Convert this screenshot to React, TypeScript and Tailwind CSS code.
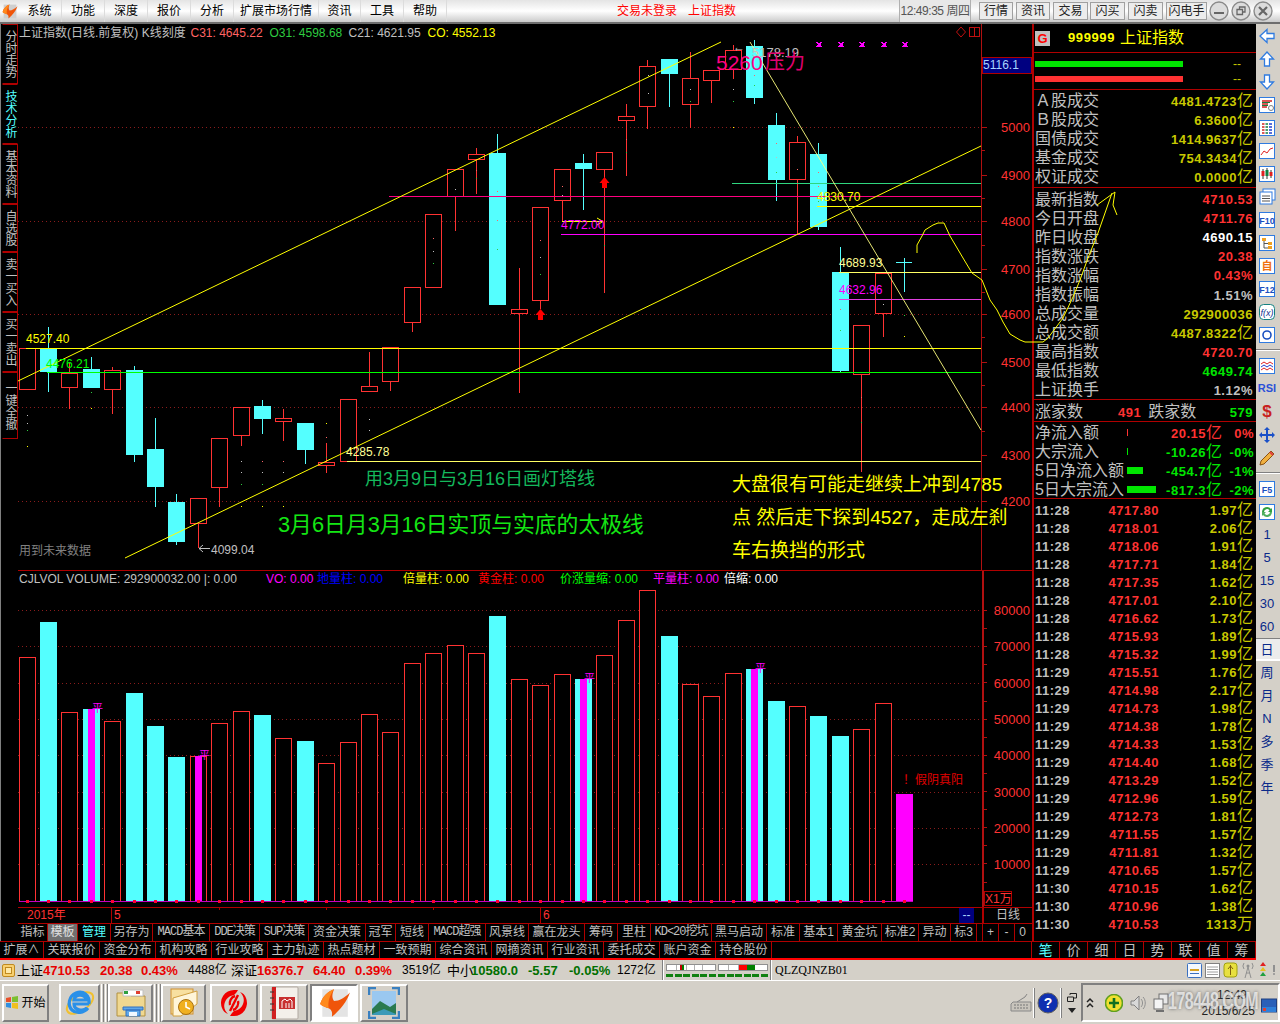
import type { ReactNode } from 'react'

const RED = '#ff3232'
const CYAN = '#54ffff'
const GRID = '#8a1c1c'
const AXIS = '#b01010'

// c = cyan (falling) candle, r = hollow red: [left, bodyTop, bodyBottom, wickTop, wickBottom]
const candles: [string, number, number, number, number, number][] = [
  ['r', 19, 348, 389, 348, 389], ['c', 40, 349, 372, 327, 392], ['r', 61, 373, 387, 363, 409],
  ['c', 83, 369, 388, 357, 388], ['r', 104, 370, 389, 367, 414], ['c', 126, 370, 455, 366, 462],
  ['c', 147, 449, 487, 418, 507], ['c', 168, 502, 542, 494, 545], ['r', 190, 498, 523, 498, 548],
  ['r', 211, 438, 487, 438, 507], ['r', 233, 407, 435, 407, 446], ['c', 254, 406, 419, 400, 434],
  ['r', 275, 418, 421, 409, 441], ['c', 297, 423, 450, 423, 464], ['r', 318, 462, 465, 443, 473],
  ['r', 340, 399, 461, 399, 461], ['r', 361, 386, 391, 352, 391], ['r', 382, 347, 381, 347, 391],
  ['r', 404, 287, 322, 287, 332], ['r', 425, 214, 287, 214, 288], ['r', 447, 169, 196, 169, 231],
  ['r', 468, 154, 159, 148, 194], ['c', 489, 153, 305, 134, 305], ['r', 511, 309, 313, 268, 393],
  ['r', 532, 207, 300, 207, 309], ['r', 554, 169, 200, 169, 222], ['c', 575, 163, 169, 154, 210],
  ['r', 596, 152, 169, 152, 293], ['r', 618, 116, 120, 104, 176], ['r', 639, 66, 106, 60, 129],
  ['c', 661, 59, 74, 59, 107], ['r', 682, 78, 104, 52, 128], ['r', 703, 70, 80, 70, 103],
  ['r', 725, 50, 69, 45, 79], ['c', 746, 46, 98, 40, 104], ['c', 768, 125, 180, 113, 201],
  ['r', 789, 142, 179, 136, 235], ['c', 810, 154, 227, 143, 230], ['c', 832, 272, 371, 247, 372],
  ['r', 853, 325, 374, 325, 472], ['r', 875, 273, 313, 273, 337],
]

const dots: [number, number, string][] = [
  [27, 415, '#c0c0c0'], [27, 423, '#c0c0c0'], [27, 430, '#2ecc40'], [27, 446, '#ffff00'],
  [241, 461, '#c0c0c0'], [241, 472, '#c0c0c0'], [241, 484, '#2ecc40'], [241, 506, '#ffff00'],
  [262, 461, '#ff6464'], [262, 472, '#c0c0c0'], [262, 484, '#2ecc40'], [262, 506, '#ffff00'],
  [283, 461, '#ff6464'], [283, 472, '#c0c0c0'], [283, 506, '#ffff00'], [326, 423, '#ffff00'],
  [326, 437, '#ff6464'], [326, 457, '#2ecc40'], [369, 419, '#c0c0c0'], [369, 430, '#c0c0c0'],
  [91, 392, '#2ecc40'], [91, 408, '#ffff00'], [433, 238, '#ff6464'], [433, 251, '#c0c0c0'], [433, 263, '#2ecc40'],
  [455, 189, '#c0c0c0'], [476, 170, '#ff6464'], [476, 178, '#2ecc40'], [497, 191, '#ff6464'], [497, 220, '#ff6464'], [497, 249, '#2ecc40'],
  [562, 186, '#ff6464'], [562, 195, '#c0c0c0'], [540, 240, '#ff6464'], [540, 257, '#c0c0c0'], [540, 274, '#2ecc40'],
  [604, 245, '#2ecc40'], [626, 139, '#ff6464'], [626, 152, '#2ecc40'], [648, 93, '#c0c0c0'], [648, 75, '#c0c0c0'],
  [690, 89, '#c0c0c0'], [690, 101, '#2ecc40'], [733, 89, '#c0c0c0'], [733, 101, '#2ecc40'], [733, 127, '#ffff00'],
  [754, 75, '#ff6464'], [754, 85, '#2ecc40'], [776, 143, '#ff6464'], [776, 157, '#c0c0c0'], [776, 172, '#2ecc40'],
  [797, 169, '#ff6464'], [818, 172, '#ff6464'], [818, 186, '#ff6464'], [818, 201, '#2ecc40'],
  [840, 309, '#ff6464'], [840, 330, '#2ecc40'], [861, 397, '#ff6464'], [861, 422, '#2ecc40'],
  [883, 304, '#c0c0c0'], [904, 315, '#2ecc40'], [904, 336, '#ffff00'],
]

// volume bars: same columns, [kind, left, top]
const volumes: [string, number, number][] = [
  ['r', 19, 657], ['c', 40, 622], ['r', 61, 712], ['p', 83, 709], ['r', 104, 721], ['c', 126, 693], ['c', 147, 726],
  ['c', 168, 757], ['q', 190, 756], ['r', 211, 723], ['r', 233, 711], ['c', 254, 715], ['r', 275, 738], ['c', 297, 741],
  ['r', 318, 763], ['r', 340, 742], ['r', 361, 714], ['r', 382, 732], ['r', 404, 663], ['r', 425, 653], ['r', 447, 645],
  ['r', 468, 653], ['c', 489, 616], ['r', 511, 679], ['r', 532, 685], ['r', 554, 674], ['p', 575, 679], ['r', 596, 655],
  ['r', 618, 620], ['r', 639, 590], ['c', 661, 636], ['r', 682, 684], ['r', 703, 696], ['r', 725, 673], ['p', 746, 669],
  ['c', 768, 701], ['r', 789, 706], ['c', 810, 716], ['c', 832, 736], ['r', 853, 729], ['r', 875, 703], ['m', 896, 794],
]

const T = ({ x, y, c, s = 12, a, children }: { x: number; y: number; c: string; s?: number; a?: 'end'; children: ReactNode }) => (
  <text x={x} y={y} fill={c} fontSize={s} textAnchor={a} dominantBaseline="central" xmlSpace="preserve">{children}</text>
)

const HLine = ({ y, x1, c, x2 = 981 }: { y: number; x1: number; c: string; x2?: number }) => (
  <line x1={x1} x2={x2} y1={y + 0.5} y2={y + 0.5} stroke={c} shapeRendering="crispEdges" />
)

const UpArrow = ({ x, t }: { x: number; t: number }) => (
  <polygon fill="#ff0000" points={`${x},${t} ${x + 5},${t + 6} ${x + 2.5},${t + 6} ${x + 2.5},${t + 11} ${x - 2.5},${t + 11} ${x - 2.5},${t + 6} ${x - 5},${t + 6}`} />
)

function KChart() {
  const priceTicks = [127, 150, 175, 198, 221, 245, 269, 292, 314, 337, 362, 385, 407, 431, 455, 478, 501]
  const priceLabels: [string, number][] = [['5000', 127], ['4900', 175], ['4800', 221], ['4700', 269], ['4600', 314], ['4500', 362], ['4400', 407], ['4300', 455], ['4200', 501]]
  return (
    <div className="h-[547px] w-full bg-black border-b border-[#b00000]">
      <svg width="1014" height="546" viewBox="18 24 1014 546" className="block">
        {[127, 221, 314, 407, 501].map((y) => (
          <line key={y} x1={18} x2={981} y1={y + 0.5} y2={y + 0.5} stroke={GRID} strokeDasharray="1 3" shapeRendering="crispEdges" />
        ))}
        <line x1={981.5} x2={981.5} y1={24} y2={570} stroke={AXIS} shapeRendering="crispEdges" />
        {priceTicks.map((y, i) => (
          <line key={y} x1={982} x2={i % 2 === 0 ? 987 : 985} y1={y + 0.5} y2={y + 0.5} stroke={AXIS} shapeRendering="crispEdges" />
        ))}
        {priceLabels.map(([l, y]) => (
          <T key={l} x={1030} y={y} c={RED} s={13} a="end">{l}</T>
        ))}

        {candles.map(([k, x, top, bot, hi, lo]) => {
          const col = k === 'c' ? CYAN : RED
          const cx = x + 8.5
          return (
            <g key={x} shapeRendering="crispEdges">
              <line x1={cx} x2={cx} y1={hi} y2={lo} stroke={col} />
              {k === 'c' ? (
                <rect x={x} y={top} width={17} height={bot - top} fill={CYAN} />
              ) : (
                <rect x={x + 0.5} y={top + 0.5} width={16} height={bot - top} fill="#000" stroke={RED} />
              )}
            </g>
          )
        })}
        <g shapeRendering="crispEdges">
          <line x1={904.5} x2={904.5} y1={258} y2={292} stroke={CYAN} />
          <line x1={896} x2={912} y1={262.5} y2={262.5} stroke={CYAN} />
        </g>
        {dots.map(([x, y, c]) => (
          <rect key={`${x}-${y}`} x={x} y={y} width={1} height={1} fill={c} />
        ))}

        <HLine y={348} x1={26} c="#ffff00" />
        <HLine y={372} x1={47} c="#00ff00" />
        <HLine y={461} x1={347} c="#ffff64" />
        <HLine y={196} x1={389} c="#ff0080" />
        <HLine y={234} x1={561} c="#ff00ff" />
        <HLine y={183} x1={732} c="#2fd67f" />
        <HLine y={206} x1={817} c="#ffff00" />
        <HLine y={272} x1={839} c="#ffff64" />
        <HLine y={299} x1={839} c="#e040e0" />

        <line x1={18} y1={381} x2={721} y2={42} stroke="#ffff00" />
        <line x1={125} y1={558} x2={981} y2={146} stroke="#ffff00" />
        <line x1={750} y1={42} x2={981} y2={430} stroke="#ffff80" strokeWidth={0.9} />

        <path d="M562 221.5H603M597 218L603 221.5L597 225" stroke="#ffff00" fill="none" />
        <path d="M199 548.5H210M199 548.5L203 545M199 548.5L203 552" stroke="#c0c0c0" fill="none" />
        <UpArrow x={540.5} t={309} />
        <UpArrow x={604.5} t={177} />

        {[819, 841, 862, 884, 905].map((x) => (
          <g key={x} stroke="#ff00ff" shapeRendering="crispEdges">
            <path d="M-2.5 -2.5L2.5 2.5M2.5 -2.5L-2.5 2.5" transform={`translate(${x} 44.5)`} />
            <rect x={x - 1} y={43} width={2} height={3} fill="#ff00ff" />
          </g>
        ))}
        <path d="M961 27L965.5 32L961 37L956.5 32Z" fill="none" stroke="#c01010" />
        <path d="M969.5 27.5H979.5V36.5H969.5ZM974.5 27.5V36.5" fill="none" stroke="#c01010" shapeRendering="crispEdges" />

        <T x={19} y={33} c="#c0c0c0">上证指数(日线.前复权) K线刻度</T>
        <T x={190.5} y={33} c="#ff6464">C31: 4645.22</T>
        <T x={269.5} y={33} c="#2ecc40">O31: 4598.68</T>
        <T x={348.5} y={33} c="#c0c0c0">C21: 4621.95</T>
        <T x={427.5} y={33} c="#ffff00">CO: 4552.13</T>

        <T x={733} y={47} c="#c0c0c0">←</T>
        <T x={752} y={52} c="#c0c0c0" s={13}>5178.19</T>
        <T x={716} y={62} c="#ff0080" s={21}>5260</T>
        <T x={765} y={62} c="#e00070" s={20}>压力</T>

        <T x={26} y={339} c="#ffff00">4527.40</T>
        <T x={46} y={363.5} c="#00ff00">4476.21</T>
        <T x={346} y={452} c="#ffff96">4285.78</T>
        <T x={211} y={549.5} c="#c0c0c0">4099.04</T>
        <T x={817} y={197} c="#ffff00">4830.70</T>
        <T x={561} y={225} c="#ff00ff">4772.00</T>
        <T x={839} y={263} c="#ffff96">4689.93</T>
        <T x={839} y={290} c="#ff00ff">4632.96</T>
        <T x={19} y={551} c="#808080">用到未来数据</T>

        <T x={365} y={479} c="#14b85c" s={18}>用3月9日与3月16日画灯塔线</T>
        <T x={278} y={524} c="#14e614" s={21.8}>3月6日月3月16日实顶与实底的太极线</T>
        <T x={732} y={484} c="#ffff00" s={19}>大盘很有可能走继续上冲到4785</T>
        <T x={732} y={517} c="#ffff00" s={19}>点 然后走下探到4527，走成左刹</T>
        <T x={732} y={550} c="#ffff00" s={19}>车右换挡的形式</T>

        <rect x={982.5} y={57.5} width={49} height={16} fill="#000080" stroke="#b00000" shapeRendering="crispEdges" />
        <T x={983} y={65} c="#a8d4ff">5116.1</T>
      </svg>
    </div>
  )
}

function VolChart() {
  const ticks = Array.from({ length: 16 }, (_, i) => 610 + i * 18.1)
  const labels: [string, number][] = [['80000', 610], ['70000', 646], ['60000', 683], ['50000', 719], ['40000', 755], ['30000', 792], ['20000', 828], ['10000', 864]]
  return (
    <div className="h-[336px] w-full bg-black">
      <svg width="1014" height="336" viewBox="18 571 1014 336" className="block">
        {labels.map(([l, y]) => (
          <line key={l} x1={18} x2={981} y1={y + 0.5} y2={y + 0.5} stroke={GRID} strokeDasharray="1 3" shapeRendering="crispEdges" />
        ))}
        <rect x={982} y={571} width={2} height={336} fill={AXIS} />
        {ticks.map((y) => (
          <line key={y} x1={984} x2={987} y1={Math.round(y) + 0.5} y2={Math.round(y) + 0.5} stroke={AXIS} shapeRendering="crispEdges" />
        ))}
        {labels.map(([l, y]) => (
          <T key={l} x={1030} y={y} c={RED} s={13} a="end">{l}</T>
        ))}
        {volumes.map(([k, x, top]) => (
          <g key={x} shapeRendering="crispEdges">
            {k === 'r' || k === 'q' ? (
              <rect x={x + 0.5} y={top + 0.5} width={16} height={901 - top} fill="#000" stroke={RED} />
            ) : (
              <rect x={x} y={top} width={17} height={901 - top} fill={k === 'm' ? '#ff00ff' : CYAN} />
            )}
            {(k === 'p' || k === 'q') && <rect x={x + 5} y={top} width={7} height={901 - top} fill="#ff00ff" />}
            {(k === 'p' || k === 'q') && <T x={x + 9} y={top - 1} c="#ff00ff" s={11}>平</T>}
          </g>
        ))}
        <line x1={19} x2={913} y1={901.5} y2={901.5} stroke="#c000c0" shapeRendering="crispEdges" />
        {volumes.map(([, x]) => (
          <rect key={x} x={x + 7} y={900} width={3} height={3} fill="#ff0030" />
        ))}

        <T x={19} y={579} c="#c0c0c0">CJLVOL VOLUME: 292900032.00 |: 0.00</T>
        <T x={266} y={579} c="#ff00ff">VO: 0.00</T>
        <T x={317} y={579} c="#0000ff">地量柱: 0.00</T>
        <T x={403} y={579} c="#ffff00">倍量柱: 0.00</T>
        <T x={478} y={579} c="#ff0000">黄金柱: 0.00</T>
        <T x={560} y={579} c="#00ff00">价涨量缩: 0.00</T>
        <T x={653} y={579} c="#ff00ff">平量柱: 0.00</T>
        <T x={724} y={579} c="#ffffff">倍缩: 0.00</T>
        <T x={903} y={780} c="#e00000">！假阴真阳</T>

        <rect x={984.5} y={891.5} width={27} height={14} fill="none" stroke="#b00000" shapeRendering="crispEdges" />
        <T x={985} y={899} c={RED} s={12}>X1万</T>
      </svg>
    </div>
  )
}

const monoTab = "font-['Liberation_Mono','Noto_Sans_CJK_SC',monospace] tracking-[-1px]"

const tabsOne = [
  { t: '指标', c: 'w-[30px] text-[#c0c0c0]' },
  { t: '模板', c: 'w-[30px] text-[#e0e0e0] bg-[#707070]' },
  { t: '管理', c: 'w-[33px] text-[#54ffff]' },
  { t: '另存为', c: 'w-[42px] text-[#c0c0c0]' },
  { t: 'MACD基本', c: `w-[57px] text-[#c0c0c0] ${monoTab}` },
  { t: 'DDE决策', c: `w-[50px] text-[#c0c0c0] ${monoTab}` },
  { t: 'SUP决策', c: `w-[49px] text-[#c0c0c0] ${monoTab}` },
  { t: '资金决策', c: 'w-[57px] text-[#c0c0c0]' },
  { t: '冠军', c: 'w-[30px] text-[#c0c0c0]' },
  { t: '短线', c: 'w-[33px] text-[#c0c0c0]' },
  { t: 'MACD超强', c: `w-[57px] text-[#c0c0c0] ${monoTab}` },
  { t: '风景线', c: 'w-[43px] text-[#c0c0c0]' },
  { t: '赢在龙头', c: 'w-[56px] text-[#c0c0c0]' },
  { t: '筹码', c: 'w-[33px] text-[#c0c0c0]' },
  { t: '里柱', c: 'w-[33px] text-[#c0c0c0]' },
  { t: 'KD<20挖坑', c: `w-[61px] text-[#c0c0c0] ${monoTab}` },
  { t: '黑马启动', c: 'w-[55px] text-[#c0c0c0]' },
  { t: '标准', c: 'w-[33px] text-[#c0c0c0]' },
  { t: '基本1', c: 'w-[38px] text-[#c0c0c0]' },
  { t: '黄金坑', c: 'w-[44px] text-[#c0c0c0]' },
  { t: '标准2', c: 'w-[37px] text-[#c0c0c0]' },
  { t: '异动', c: 'w-[32px] text-[#c0c0c0]' },
  { t: '标3', c: 'w-[26px] text-[#c0c0c0]' },
]

const tabsTwo = ['扩展∧', '关联报价', '资金分布', '机构攻略', '行业攻略', '主力轨迹', '热点题材', '一致预期', '综合资讯', '网摘资讯', '行业资讯', '委托成交', '账户资金', '持仓股份']

function DateAxis() {
  return (
    <div className="flex h-[16px] w-full shrink-0 bg-black border-t border-[#b00000] text-[12px] leading-[15px] text-[#ff3232]">
      <div className="w-[93px] pl-[9px]">2015年</div>
      <div className="relative w-[429px] border-l border-[#b00000] pl-[2px]">
        5
        <span className="absolute left-[107px] top-0 h-[2px] w-px bg-[#b00000]" />
        <span className="absolute left-[214px] top-0 h-[2px] w-px bg-[#b00000]" />
        <span className="absolute left-[321px] top-0 h-[2px] w-px bg-[#b00000]" />
      </div>
      <div className="w-[419px] border-l border-[#b00000] pl-[2px]">6</div>
      <div className="w-[15px] bg-[#000080] text-center text-[#a8d4ff]">--</div>
      <div className="w-[8px]" />
      <div className="w-[50px] border-l-2 border-[#b00000] text-center text-[#c0c0c0]">日线</div>
    </div>
  )
}

function TabRowOne() {
  return (
    <div className="flex h-[18px] w-full shrink-0 bg-black border-t border-[#b00000] text-[12px] leading-[17px]">
      {tabsOne.map((tab) => (
        <div key={tab.t} className={`flex shrink-0 items-center justify-center whitespace-nowrap border-r border-[#b00000] ${tab.c}`}>{tab.t}</div>
      ))}
      <div className="w-[5px]" />
      {['+', '-', '0'].map((s) => (
        <div key={s} className="flex w-[16px] items-center justify-center border-l border-[#b00000] text-[#c0c0c0] first:w-[17px]">{s}</div>
      ))}
    </div>
  )
}

function TabRowTwo() {
  return (
    <div className="flex h-[19px] w-full shrink-0 bg-black border-t border-b-2 border-t-[#b00000] border-b-[#ff0000] text-[12px] leading-none text-[#c0c0c0]">
      {tabsTwo.map((t, i) => (
        <div key={t} className={`flex shrink-0 items-center justify-center border-r border-[#b00000] ${i === 0 ? 'w-[44px]' : 'w-[56px]'}`}>{t}</div>
      ))}
      <div className="w-[260px] shrink-0 border-r border-[#b00000]" />
      {['笔', '价', '细', '日', '势', '联', '值', '筹'].map((t, i) => (
        <div key={t} className={`flex w-[28px] shrink-0 items-center justify-center border-r border-[#b00000] text-[14px] ${i === 0 ? 'text-[#54ffff]' : ''}`}>{t}</div>
      ))}
    </div>
  )
}

const Num = ({ v, c, unit }: { v: string; c: string; unit?: string }) => (
  <span className={`text-[13px] font-bold tracking-[0.5px] ${c}`}>
    {v}
    {unit && <span className="text-[16px] font-normal tracking-normal">{unit}</span>}
  </span>
)

const Row = ({ l, children }: { l: string; children: ReactNode }) => (
  <div className="flex h-[19.1px] items-center justify-between pl-px pr-[3px] leading-none">
    <span className="text-[16px] text-[#c0c0c0]">{l}</span>
    {children}
  </div>
)

const ticks: [string, string, string, string?][] = [
  ['11:28', '4717.80', '1.97'], ['11:28', '4718.01', '2.06'], ['11:28', '4718.06', '1.91'], ['11:28', '4717.71', '1.84'],
  ['11:28', '4717.35', '1.62'], ['11:28', '4717.01', '2.10'], ['11:28', '4716.62', '1.73'], ['11:28', '4715.93', '1.89'],
  ['11:28', '4715.32', '1.99'], ['11:29', '4715.51', '1.76'], ['11:29', '4714.98', '2.17'], ['11:29', '4714.73', '1.98'],
  ['11:29', '4714.38', '1.78'], ['11:29', '4714.33', '1.53'], ['11:29', '4714.40', '1.68'], ['11:29', '4713.29', '1.52'],
  ['11:29', '4712.96', '1.59'], ['11:29', '4712.73', '1.81'], ['11:29', '4711.55', '1.57'], ['11:29', '4711.81', '1.32'],
  ['11:29', '4710.65', '1.57'], ['11:30', '4710.15', '1.62'], ['11:30', '4710.96', '1.38'], ['11:30', '4710.53', '1313', '万'],
]

const flows = [
  { l: '净流入额', bar: 'w-px bg-[#ff3232]', v: '20.15', p: '0%', c: 'text-[#ff3232]' },
  { l: '大宗流入', bar: 'w-px bg-[#00e600]', v: '-10.26', p: '-0%', c: 'text-[#00e600]' },
  { l: '5日净流入额', bar: 'w-[16px] bg-[#00e600]', v: '-454.7', p: '-1%', c: 'text-[#00e600]' },
  { l: '5日大宗流入', bar: 'w-[29px] bg-[#00e600]', v: '-817.3', p: '-2%', c: 'text-[#00e600]' },
]

function RightPanel() {
  return (
    <div className="flex h-full w-[224px] shrink-0 flex-col border-l-2 border-[#b00000] bg-black">
      <div className="flex h-[29px] shrink-0 items-center border-b border-[#b00000] pl-px">
        <span className="flex h-[15px] w-[15px] items-center justify-center bg-[#c0c0c0] text-[13px] font-bold leading-none text-[#ff0000]">G</span>
        <span className="ml-[18px] text-[13px] font-bold tracking-[0.6px] text-[#ffff00]">999999</span>
        <span className="ml-[5px] text-[16px] leading-none text-[#ffff00]">上证指数</span>
      </div>
      <div className="flex h-[37px] shrink-0 flex-col justify-center gap-[9px] border-b border-[#b00000] pl-[1px]">
        <div className="flex h-[6px] items-center justify-between pr-[15px]">
          <div className="h-[6px] w-[148px] bg-[#00e600]" />
          <span className="text-[12px] leading-none text-[#c8c800]">--</span>
        </div>
        <div className="flex h-[6px] items-center justify-between pr-[15px]">
          <div className="h-[6px] w-[148px] bg-[#ff3232]" />
          <span className="text-[12px] leading-none text-[#c8c800]">--</span>
        </div>
      </div>
      <div className="h-[98px] shrink-0 border-b border-[#b00000] pt-px">
        <Row l="Ａ股成交"><Num v="4481.4723" c="text-[#c8c800]" unit="亿" /></Row>
        <Row l="Ｂ股成交"><Num v="6.3600" c="text-[#c8c800]" unit="亿" /></Row>
        <Row l="国债成交"><Num v="1414.9637" c="text-[#c8c800]" unit="亿" /></Row>
        <Row l="基金成交"><Num v="754.3434" c="text-[#c8c800]" unit="亿" /></Row>
        <Row l="权证成交"><Num v="0.0000" c="text-[#c8c800]" unit="亿" /></Row>
      </div>
      <div className="h-[212px] shrink-0 border-b border-[#b00000] pt-[2px]">
        <Row l="最新指数"><Num v="4710.53" c="text-[#ff3232]" /></Row>
        <Row l="今日开盘"><Num v="4711.76" c="text-[#ff3232]" /></Row>
        <Row l="昨日收盘"><Num v="4690.15" c="text-white" /></Row>
        <Row l="指数涨跌"><Num v="20.38" c="text-[#ff3232]" /></Row>
        <Row l="指数涨幅"><Num v="0.43%" c="text-[#ff3232]" /></Row>
        <Row l="指数振幅"><Num v="1.51%" c="text-[#c0c0c0]" /></Row>
        <Row l="总成交量"><Num v="292900036" c="text-[#c8c800]" /></Row>
        <Row l="总成交额"><Num v="4487.8322" c="text-[#c8c800]" unit="亿" /></Row>
        <Row l="最高指数"><Num v="4720.70" c="text-[#ff3232]" /></Row>
        <Row l="最低指数"><Num v="4649.74" c="text-[#00e600]" /></Row>
        <Row l="上证换手"><Num v="1.12%" c="text-[#c0c0c0]" /></Row>
      </div>
      <div className="flex h-[22px] shrink-0 items-center border-b border-[#b00000] pl-px pr-[3px] pt-[2px] leading-none">
        <span className="text-[16px] text-[#c0c0c0]">涨家数</span>
        <span className="ml-[35px]"><Num v="491" c="text-[#ff3232]" /></span>
        <span className="ml-[7px] text-[16px] text-[#c0c0c0]">跌家数</span>
        <span className="ml-auto"><Num v="579" c="text-[#00e600]" /></span>
      </div>
      <div className="h-[77px] shrink-0 border-b border-[#b00000] pt-px">
        {flows.map((f) => (
          <div key={f.l} className="flex h-[19px] items-center pl-px leading-none">
            <span className="w-[92px] whitespace-nowrap text-[16px] text-[#c0c0c0]">{f.l}</span>
            <div className="w-[30px]"><div className={`h-[7px] ${f.bar}`} /></div>
            <div className="w-[65px] text-right"><Num v={f.v} c={f.c} unit="亿" /></div>
            <div className="w-[32px] text-right"><Num v={f.p} c={f.c} /></div>
          </div>
        ))}
      </div>
      <div className="pt-[2px]">
        {ticks.map(([time, price, amt, unit], i) => (
          <div key={i} className="flex h-[18px] items-center pl-[1px] pr-[3px] leading-none">
            <span className="w-[60px]"><Num v={time} c="text-[#c0c0c0]" /></span>
            <span className="w-[64px] text-right"><Num v={price} c="text-[#ff3232]" /></span>
            <span className="flex-1 text-right"><Num v={amt} c="text-[#c8c800]" unit={unit ?? '亿'} /></span>
          </div>
        ))}
      </div>
    </div>
  )
}

function LeftTabs() {
  const tabs = [
    { t: '分时走势', h: 'h-[60px]', c: 'text-[#c0c0c0]' },
    { t: '技术分析', h: 'h-[60px]', c: 'text-[#54ffff] border-r-black' },
    { t: '基本资料', h: 'h-[60px]', c: 'text-[#c0c0c0]' },
    { t: '自选股', h: 'h-[48px]', c: 'text-[#c0c0c0]' },
    { t: '卖一买入', h: 'h-[60px]', c: 'text-[#c0c0c0]' },
    { t: '买一卖出', h: 'h-[60px]', c: 'text-[#c0c0c0]' },
    { t: '一键全撤', h: 'h-[67px]', c: 'text-[#c0c0c0]' },
  ]
  return (
    <div className="h-full w-[18px] shrink-0 border-l border-[#808080] bg-black pl-px">
      {tabs.map((tab) => (
        <div key={tab.t} className={`flex w-[16px] items-center justify-center border border-l-black border-[#b00000] [writing-mode:vertical-rl] text-[12px] leading-[14px] ${tab.h} ${tab.c}`}>
          {tab.t}
        </div>
      ))}
    </div>
  )
}

function Logo({ size, bg }: { size: number; bg?: string }) {
  return (
    <svg width={size} height={size} viewBox="0 0 32 32">
      <rect x="5" y="3" width="24" height="26" fill={bg ?? '#cfcfcf'} />
      <path d="M3 17C5 10 10 5 16 3C14 8 14 11 16 14C21 14 26 11 31 6C28 15 22 22 14 29C15 24 13 22 11 21C8 20 5 19 3 17Z" fill="#f0550a" />
      <path d="M3 17C5 10 10 5 16 3C12 9 10 14 11 21C8 20 5 19 3 17Z" fill="#ff8a1e" />
    </svg>
  )
}

const menu = [
  { t: '系统', w: 'w-[44px]' }, { t: '功能', w: 'w-[43px]' }, { t: '深度', w: 'w-[43px]' }, { t: '报价', w: 'w-[43px]' },
  { t: '分析', w: 'w-[43px]' }, { t: '扩展市场行情', w: 'w-[85px]' }, { t: '资讯', w: 'w-[42px]' }, { t: '工具', w: 'w-[43px]' }, { t: '帮助', w: 'w-[43px]' },
]

const topBtns = [
  { t: '行情', w: 'w-[34px] ml-[8px]' }, { t: '资讯', w: 'w-[34px] ml-[3px]' }, { t: '交易', w: 'w-[35px] ml-[3px]' },
  { t: '闪买', w: 'w-[35px] ml-[2px]' }, { t: '闪卖', w: 'w-[35px] ml-[3px]' }, { t: '闪电手', w: 'w-[41px] ml-[3px]' },
]

function WinButton({ d }: { d: ReactNode }) {
  return (
    <svg width="20" height="20" viewBox="0 0 20 20" className="ml-[2px]">
      <circle cx="10" cy="10" r="9" fill="#dcdcdc" stroke="#8a8a8a" strokeWidth="1.4" />
      {d}
    </svg>
  )
}

function TopBar() {
  return (
    <div className="flex h-[24px] shrink-0 items-center border-b-2 border-[#6e6e6e] bg-gradient-to-b from-[#e4e4e4] via-white to-[#cbcbcb] text-[12px] text-black">
      <div className="flex w-[18px] justify-center"><Logo size={17} /></div>
      {menu.map((m) => (
        <div key={m.t} className={`flex h-full items-center justify-center border-r border-[#dcdcdc] ${m.w}`}>{m.t}</div>
      ))}
      <span className="ml-[170px] text-[#ff0000]">交易未登录</span>
      <span className="ml-[11px] text-[#ff0000]">上证指数</span>
      <div className="ml-[163px] flex h-full w-[72px] items-center justify-center whitespace-nowrap border-x border-[#b0b0b0] bg-[#e8e8e8] tracking-[-0.45px] text-[#555]">12:49:35 周四</div>
      {topBtns.map((b) => (
        <div key={b.t} className={`flex h-[18px] items-center justify-center border border-[#a0a0a0] bg-[#ececec] text-[#222] ${b.w}`}>{b.t}</div>
      ))}
      <WinButton d={<rect x="5" y="11" width="10" height="2" fill="#666" />} />
      <WinButton d={<path d="M6 8.5h5.5v5H6zM8.5 8.5V6H14v5h-2.5" fill="none" stroke="#666" strokeWidth="1.3" />} />
      <WinButton d={<path d="M6 6l8 8M14 6l-8 8" stroke="#666" strokeWidth="2.2" />} />
    </div>
  )
}

const Box = ({ children, teal }: { children: ReactNode; teal?: boolean }) => (
  <svg width="16" height="16" viewBox="0 0 16 16">
    <rect x="0.5" y="0.5" width="15" height="15" rx={teal ? 4 : 0} fill="#fff" stroke={teal ? '#148080' : '#2f7be0'} />
    {children}
  </svg>
)

const BoxText = ({ t, c = '#1a4fc0', s = 9 }: { t: string; c?: string; s?: number }) => (
  <text x="8" y="11.5" fontSize={s} textAnchor="middle" fill={c} fontWeight="bold">{t}</text>
)

const Arrow = ({ r }: { r: number }) => (
  <svg width="16" height="18" viewBox="0 0 16 16">
    <path d="M8 1L14.5 8H10.5V15H5.5V8H1.5Z" fill="#fff" stroke="#2f7be0" strokeWidth="1.3" transform={`rotate(${r} 8 8)`} />
  </svg>
)

const sideIcons: ReactNode[] = [
  <Arrow r={-90} />, <Arrow r={0} />, <Arrow r={180} />,
  <Box><path d="M3 4h10M3 7h6M3 10h5" stroke="#d02020" strokeWidth="1.4" /><path d="M3 5.5h8M3 8.5h6" stroke="#108040" /><circle cx="12" cy="11" r="2.5" fill="none" stroke="#808080" /></Box>,
  <Box><path d="M3 4h2.5M3 7h2.5M3 10h2.5M3 13h2.5" stroke="#d02020" strokeWidth="1.4" /><path d="M6.5 4h2.5M6.5 7h2.5M6.5 10h2.5M6.5 13h2.5" stroke="#108040" strokeWidth="1.4" /><path d="M10 4h3M10 7h3M10 10h3M10 13h3" stroke="#2040d0" strokeWidth="1.4" /></Box>,
  <Box><path d="M2 12L5 8L8 10L11 6L14 5" fill="none" stroke="#e02020" /></Box>,
  <Box><path d="M4 3v10M8 2v11M12 4v8" stroke="#333" /><rect x="2.5" y="5" width="3" height="5" fill="#e02020" /><rect x="6.5" y="4" width="3" height="6" fill="#108040" /><rect x="10.5" y="6" width="3" height="4" fill="#e02020" /></Box>,
  <svg width="17" height="17" viewBox="0 0 17 17"><rect x="4" y="1" width="12" height="11" fill="#fff" stroke="#2f7be0" /><rect x="1" y="4" width="12" height="12" fill="#fff" stroke="#2f7be0" /><path d="M3 8h8M3 10.5h8M3 13h8" stroke="#555" /></svg>,
  <Box><BoxText t="F10" /></Box>,
  <Box><rect x="3" y="3" width="4" height="3" fill="#f0a020" /><rect x="9" y="7" width="4" height="3" fill="#f0a020" /><rect x="9" y="11" width="4" height="3" fill="#f0a020" /><path d="M5 6v7h4M5 8.5h4" fill="none" stroke="#555" /></Box>,
  <Box><BoxText t="自" c="#f07010" s={11} /></Box>,
  <Box><BoxText t="F12" /></Box>,
  <Box teal><text x="8" y="11.5" fontSize="9" textAnchor="middle" fill="#143090" fontStyle="italic">f(x)</text></Box>,
  <Box><circle cx="8" cy="8" r="4" fill="none" stroke="#1a4fc0" strokeWidth="1.6" /></Box>,
  'sep',
  <Box><path d="M2 6l3-2 3 2 3-2 3 2" fill="none" stroke="#e02020" /><path d="M2 9l3-2 3 2 3-2 3 2" fill="none" stroke="#2040d0" /><path d="M2 12l3-2 3 2 3-2 3 2" fill="none" stroke="#e02020" /></Box>,
  <span className="text-[11px] font-bold leading-none text-[#2a50d8]">RSI</span>,
  <span className="text-[17px] font-bold leading-none text-[#c81e1e]">$</span>,
  <svg width="18" height="18" viewBox="0 0 18 18"><path d="M9 1l3 3H10v4h4V6l3 3-3 3v-2h-4v4h2l-3 3-3-3h2v-4H4v2L1 9l3-3v2h4V4H6Z" fill="#1a50c8" /></svg>,
  <svg width="18" height="18" viewBox="0 0 18 18"><path d="M13 2l3 3L6 15l-4 1 1-4Z" fill="#f0b040" stroke="#8a5010" /><path d="M12 3l3 3" stroke="#e04040" strokeWidth="2" /></svg>,
  'sep',
  <Box><BoxText t="F5" /></Box>,
  <Box><path d="M3 8a5 5 0 0 1 9-3l1-1v4H9l1.5-1.5A3 3 0 0 0 5 8Z" fill="#30a040" /><path d="M13 8a5 5 0 0 1-9 3l-1 1V8h4l-1.5 1.5A3 3 0 0 0 11 8Z" fill="#50b060" /></Box>,
]

function Sidebar() {
  const labels = ['1', '5', '15', '30', '60', '日', '周', '月', 'N', '多', '季', '年']
  return (
    <div className="flex w-[24px] shrink-0 flex-col items-center bg-[#d4d0c8] text-[#0a2a8a]">
      {sideIcons.map((ic, i) =>
        ic === 'sep' ? (
          <div key={i} className="flex h-[8px] w-full items-center">
            <div className="h-[2px] w-full border-t border-b border-t-[#808080] border-b-white" />
          </div>
        ) : (
          <div key={i} className="flex h-[23px] w-full items-center justify-center pr-[2px]">{ic}</div>
        ),
      )}
      {labels.map((l) => (
        <div key={l} className={`flex h-[23px] w-full items-center justify-center pr-[2px] text-[13px] leading-none ${l === '日' ? 'border-t border-b-2 border-t-[#808080] border-b-white bg-[#ececec]' : ''}`}>{l}</div>
      ))}
    </div>
  )
}

const statusItems = [
  { t: '上证', c: 'w-[26px] text-[13px] text-black' },
  { t: '4710.53', c: 'w-[57px] font-bold text-[#e80000]' },
  { t: '20.38', c: 'w-[41px] font-bold text-[#e80000]' },
  { t: '0.43%', c: 'w-[47px] font-bold text-[#e80000]' },
  { t: '4488亿', c: 'w-[43px] text-[12px] text-black' },
  { t: '深证', c: 'w-[26px] text-[13px] text-black' },
  { t: '16376.7', c: 'w-[56px] font-bold text-[#e80000]' },
  { t: '64.40', c: 'w-[42px] font-bold text-[#e80000]' },
  { t: '0.39%', c: 'w-[47px] font-bold text-[#e80000]' },
  { t: '3519亿', c: 'w-[45px] text-[12px] text-black' },
  { t: '中小', c: 'w-[24px] text-[13px] text-black' },
  { t: '10580.0', c: 'w-[57px] font-bold text-[#006f00]' },
  { t: '-5.57', c: 'w-[41px] font-bold text-[#006f00]' },
  { t: '-0.05%', c: 'w-[48px] font-bold text-[#006f00]' },
  { t: '1272亿', c: 'w-[45px] text-[12px] text-black' },
]

function Meter({ hot }: { hot?: boolean }) {
  return (
    <div className="flex w-[50px] flex-col gap-[3px]">
      <div className="flex h-[7px] border border-[#909090] bg-white">
        <div className="h-full w-[10px] border-r border-[#b0b0b0]" />
        <div className="flex h-full w-[10px] justify-center border-r border-[#b0b0b0]">
          {!hot && <div className="h-full w-[2px] bg-[#c00000]" />}
          {!hot && <div className="h-full w-[2px] bg-[#008000]" />}
        </div>
        <div className={`h-full w-[8px] ${hot ? 'bg-[#ff0000]' : 'border-r border-[#b0b0b0]'}`} />
        <div className={`h-full w-[8px] ${hot ? 'bg-[#008000]' : 'border-r border-[#b0b0b0]'}`} />
        <div className="h-full w-[8px]" />
      </div>
      <div className="flex justify-between">
        {[0, 1, 2, 3, 4, 5].map((i) => <div key={i} className="h-[3px] w-[7px] bg-[#108010]" />)}
      </div>
    </div>
  )
}

function StatusBar() {
  return (
    <div className="flex h-[21px] shrink-0 items-center border-b border-white bg-[#d4d0c8] text-[13px] leading-none">
      <div className="flex w-[17px] shrink-0 justify-center">
        <div className="flex h-[13px] w-[13px] items-center justify-center rounded-[2px] border border-[#c08a20] bg-[#f8d070]"><div className="h-[7px] w-[7px] border border-[#c08a20] bg-[#ffe9a8]" /></div>
      </div>
      {statusItems.map((s) => (
        <span key={s.t} className={`shrink-0 whitespace-nowrap ${s.c}`}>{s.t}</span>
      ))}
      <div className="h-full w-[2px] border-l border-r border-l-[#808080] border-r-white" />
      <div className="ml-[2px] flex gap-[2px]"><Meter /><Meter hot /></div>
      <div className="ml-[2px] h-full w-[2px] border-l border-r border-l-[#808080] border-r-white" />
      <span className="ml-[3px] font-['Liberation_Serif',serif] text-[12px] text-black">QLZQJNZB01</span>
      <div className="ml-auto mr-[3px] flex items-center gap-[3px]">
        <svg width="15" height="15" viewBox="0 0 15 15"><rect x="0.5" y="0.5" width="14" height="14" rx="1" fill="#f4f8ff" stroke="#3a70c0" /><path d="M3 7h9" stroke="#d8a020" strokeWidth="2" /><path d="M3 10.5h9" stroke="#3a70c0" /></svg>
        <svg width="15" height="15" viewBox="0 0 15 15"><rect x="0.5" y="0.5" width="14" height="14" fill="#fff" stroke="#808080" /><path d="M2 4h11M2 6.5h11M2 9h11M2 11.5h11" stroke="#a0a0a0" /></svg>
        <svg width="15" height="16" viewBox="0 0 15 16"><rect x="1" y="1" width="13" height="14" rx="3" fill="#e8e040" stroke="#a0a010" /><path d="M7.5 3v10M5 7l2.5-3L10 7" stroke="#806010" fill="none" /></svg>
        <svg width="14" height="18" viewBox="0 0 14 18"><path d="M7 6L4 17M7 6l3 11M5 12h4" stroke="#909090" fill="none" /><circle cx="7" cy="5" r="1.5" fill="#909090" /><path d="M3 2a5 5 0 0 0 0 6M11 2a5 5 0 0 1 0 6" stroke="#909090" fill="none" /></svg>
        <svg width="10" height="16" viewBox="0 0 10 16"><path d="M5 0l3 4H2Z" fill="#e02020" /><path d="M5 5l3 4H2Z" fill="#e8c020" /><path d="M5 10l3 4H2Z" fill="#20a040" /></svg>
        <svg width="6" height="14" viewBox="0 0 6 14"><path d="M3 2v7" stroke="#909090" strokeWidth="2" /><circle cx="3" cy="11" r="1" fill="#909090" /></svg>
      </div>
    </div>
  )
}

const TaskBtn = ({ w, pressed, children }: { w: string; pressed?: boolean; children: ReactNode }) => (
  <div className={`flex h-[38px] shrink-0 items-center justify-center border-2 ${w} ${pressed ? 'border-t-[#808080] border-l-[#808080] border-r-white border-b-white bg-white' : 'border-t-white border-l-white border-r-[#808080] border-b-[#808080] bg-[#d4d0c8]'}`}>
    {children}
  </div>
)

function Taskbar() {
  return (
    <div className="flex h-[43px] shrink-0 items-center bg-[#d4d0c8] pl-[2px]">
      <TaskBtn w="w-[47px]">
        <svg width="15" height="15" viewBox="0 0 15 15"><path d="M1 3l5-1v5H1Z" fill="#e8502a" /><path d="M7 2l6-1v6H7Z" fill="#7cc030" /><path d="M1 8h5v5l-5-1Z" fill="#3090e0" /><path d="M7 8h6v6l-6-1Z" fill="#f0c020" /></svg>
        <span className="ml-[1px] text-[12px] text-black">开始</span>
      </TaskBtn>
      <div className="ml-[10px]" />
      <TaskBtn w="w-[41px]">
        <svg width="32" height="32" viewBox="0 0 32 32">
          <ellipse cx="16" cy="16" rx="15" ry="8" fill="none" stroke="#f0c030" strokeWidth="2" transform="rotate(-35 16 16)" />
          <path d="M25 17H10c0 6 9 8 13 4M10 13c1-6 10-7 13 0ZM25 17c1-9-6-14-13-11-7 3-9 12-4 17 4 4 12 3 16-2" fill="none" stroke="#2a90e8" strokeWidth="3.2" />
        </svg>
      </TaskBtn>
      <div className="mx-[1px] h-[38px] w-[3px] border-x border-l-white border-r-[#808080]" />
      <div className="h-[38px] w-[3px] border-x border-l-white border-r-[#808080]" />
      <TaskBtn w="w-[45px]">
        <svg width="34" height="34" viewBox="0 0 34 34">
          <path d="M3 7h11l3 3h14v20H3Z" fill="#f0d890" stroke="#b09040" />
          <path d="M9 4h20v6H9Z" fill="#fff" stroke="#c0c0c0" /><rect x="10" y="5" width="4" height="3" fill="#30a040" /><rect x="22" y="5" width="4" height="3" fill="#e04030" />
          <path d="M9 21h20v3H9ZM12 24h14v6H12Z" fill="#60a8e8" stroke="#3070c0" />
          <rect x="15" y="26" width="8" height="4" fill="#f0f8ff" />
        </svg>
      </TaskBtn>
      <div className="mx-[1px] h-[38px] w-[3px] border-x border-l-white border-r-[#808080]" />
      <div className="h-[38px] w-[3px] border-x border-l-white border-r-[#808080]" />
      <TaskBtn w="w-[45px]">
        <svg width="34" height="34" viewBox="0 0 34 34">
          <rect x="4" y="3" width="22" height="25" fill="#f8e0a0" stroke="#d09030" />
          <path d="M6 12L30 5V18L14 30H6Z" fill="#fff5d8" stroke="#d0a040" />
          <circle cx="19" cy="21" r="7.5" fill="#f0b020" stroke="#a87010" />
          <path d="M19 16v5l4 2" stroke="#fff" strokeWidth="1.6" fill="none" />
        </svg>
      </TaskBtn>
      <div className="ml-[4px]" />
      <TaskBtn w="w-[48px]">
        <svg width="32" height="32" viewBox="0 0 32 32">
          <path d="M16 3A13 13 0 0 0 4 21c1 3 3 5 6 6-3-3-5-7-3-12 1-3 4-6 9-7 2-2 3-3 4-5Z" fill="#f00000" />
          <path d="M16 29a13 13 0 0 0 12-18c-1-3-3-5-6-6 3 3 5 7 3 12-1 3-4 6-9 7-2 2-3 3-4 5Z" fill="#f00000" />
          <path d="M20 8L12 24M17 9c-4 1-6 6-5 9M15 23c4-1 6-6 5-9" fill="none" stroke="#f00000" strokeWidth="2.4" />
        </svg>
      </TaskBtn>
      <div className="ml-[2px]" />
      <TaskBtn w="w-[48px]">
        <svg width="30" height="34" viewBox="0 0 30 34">
          <rect x="3" y="1" width="26" height="32" rx="1" fill="#f4f0ea" stroke="#b0a8a0" />
          <rect x="3" y="1" width="4" height="32" fill="#d02020" />
          <path d="M1 6h4M1 12h4M1 18h4M1 24h4" stroke="#333" />
          <rect x="10" y="11" width="16" height="12" fill="#c83030" />
          <path d="M13 22V15l3-2 2 2 3-2 2 2v7M17 22v-5M20 22v-5" stroke="#fff" fill="none" />
        </svg>
      </TaskBtn>
      <div className="ml-[2px]" />
      <TaskBtn w="w-[48px]" pressed><Logo size={34} bg="#e4e4e4" /></TaskBtn>
      <div className="ml-[2px]" />
      <TaskBtn w="w-[48px]">
        <svg width="32" height="32" viewBox="0 0 32 32">
          <rect x="4" y="4" width="24" height="24" fill="#9ac8f0" />
          <path d="M4 22L12 14L22 20L28 16V28H4Z" fill="#2a7a50" /><path d="M4 27L16 22L28 27V28H4Z" fill="#3a9ab8" />
          <path d="M1 8V1H8M24 1H31V8M31 24V31H24M8 31H1V24" fill="none" stroke="#3a80c0" strokeWidth="2.5" />
        </svg>
      </TaskBtn>

      <div className="ml-auto flex items-center">
        <svg width="24" height="20" viewBox="0 0 24 20">
          <path d="M4 9h18v9H2v-7ZM8 9l8-5 2-3" fill="#c8c4bc" stroke="#888" />
          <path d="M5 12h14M5 15h14" stroke="#777" strokeDasharray="2 1" />
        </svg>
        <div className="mr-[2px] h-[30px] w-[2px] border-x border-l-white border-r-[#808080]" />
        <svg width="22" height="22" viewBox="0 0 22 22">
          <circle cx="11" cy="11" r="10" fill="#1030b0" stroke="#606060" />
          <text x="11" y="16" fontSize="14" fontWeight="bold" fill="#fff" textAnchor="middle">?</text>
        </svg>
        <div className="ml-px mr-[3px] h-[30px] w-[2px] border-x border-l-white border-r-[#808080]" />
        <div className="flex w-[14px] flex-col items-center gap-[6px]">
          <svg width="10" height="9" viewBox="0 0 10 9"><path d="M0.5 4h6v4.5h-6ZM3 2V0.5h6.5V5H7" fill="none" stroke="#222" /></svg>
          <svg width="8" height="5" viewBox="0 0 8 5"><path d="M0 0h8L4 5Z" fill="#222" /></svg>
        </div>
        <div className="relative ml-[2px] flex h-[39px] w-[199px] items-center border-2 border-t-[#808080] border-l-[#808080] border-r-white border-b-white pl-[2px]">
          <svg width="10" height="12" viewBox="0 0 10 12"><path d="M2 5l3-3 3 3M2 10l3-3 3 3" fill="none" stroke="#222" strokeWidth="1.5" /></svg>
          <svg width="18" height="18" viewBox="0 0 18 18" className="ml-[10px]">
            <circle cx="9" cy="9" r="8.5" fill="#f0e030" stroke="#60a020" strokeWidth="1.6" />
            <path d="M9 4v10M4 9h10" stroke="#107020" strokeWidth="2.6" />
          </svg>
          <svg width="16" height="18" viewBox="0 0 16 18" className="ml-[7px]">
            <path d="M1 7h3l5-5v14l-5-5H1Z" fill="#d8d8d8" stroke="#808080" />
            <path d="M11 5c2 2 2 6 0 8M13 3c3 3 3 9 0 12" fill="none" stroke="#909090" />
          </svg>
          <svg width="18" height="20" viewBox="0 0 18 20" className="ml-[7px]">
            <rect x="6" y="1" width="9" height="10" fill="#e8e8e8" stroke="#707070" />
            <rect x="1" y="6" width="9" height="10" fill="#f4f4f4" stroke="#707070" />
            <path d="M3 18h8" stroke="#707070" strokeWidth="2" />
          </svg>
          <div className="absolute right-[23px] top-[2px] text-right text-[12px] leading-[16px] text-[#222]">
            <div className="pr-[8px]">12:49</div>
            <div>2015/6/25</div>
          </div>
          <svg width="16" height="16" viewBox="0 0 16 16" className="absolute right-[1px] top-[13px]">
            <rect x="0.5" y="1" width="15" height="13" fill="#2a60b8" stroke="#204080" />
            <rect x="1" y="9" width="14" height="5" fill="#3080d8" /><rect x="2" y="10" width="3" height="3" fill="#e04030" />
          </svg>
          <span className="absolute left-[85px] top-[7px] origin-center scale-y-[1.45] whitespace-nowrap text-[16px] font-bold leading-[20px] tracking-[-0.5px] text-white/70 [text-shadow:0_0_3px_#666]">178448.COM</span>
        </div>
      </div>
    </div>
  )
}

export default function App() {
  return (
    <div className="relative flex h-[1024px] w-[1280px] flex-col overflow-hidden bg-[#d4d0c8] font-['Liberation_Sans','Noto_Sans_CJK_SC',sans-serif]">
      <TopBar />
      <div className="flex h-[936px] shrink-0">
        <div className="flex w-[1256px] shrink-0 flex-col">
          <div className="flex h-[917px] shrink-0 overflow-hidden">
            <LeftTabs />
            <div className="flex w-[1014px] shrink-0 flex-col bg-black">
              <KChart />
              <VolChart />
              <DateAxis />
              <TabRowOne />
            </div>
            <RightPanel />
          </div>
          <TabRowTwo />
        </div>
        <Sidebar />
      </div>
      <StatusBar />
      <Taskbar />

      {/* hand drawn curve runs across the axis and the quote panel */}
      <svg width="1280" height="1024" className="pointer-events-none absolute left-0 top-0">
        <path
          d="M917 253V245L922 236L925 230L933 225L938 223L944 223L950 236L963 258L972 273L982 280L990 300L997 310L1003 322L1010 334L1020 340L1025 342L1043 342L1048 338L1063 318L1073 297L1080 280L1088 258L1098 233L1112 193M1097 205L1115 192L1113 205L1117 215"
          fill="none"
          stroke="#ffff00"
        />
      </svg>
    </div>
  )
}
